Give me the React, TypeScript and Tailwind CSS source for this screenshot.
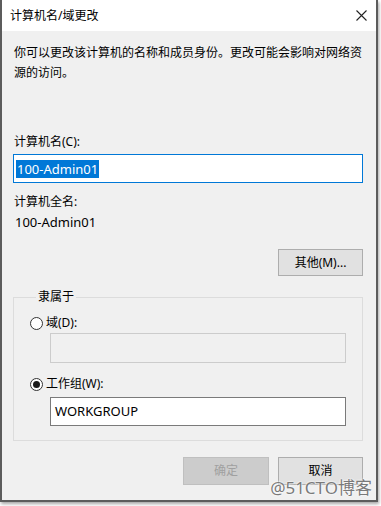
import React from "react";

const font = "font-['Noto_Sans','Noto_Sans_CJK_SC',sans-serif]";

const Radio = ({ checked }: { checked?: boolean }) => (
    <span className="w-[13px] h-[13px] rounded-full border border-[#333] bg-white flex items-center justify-center shrink-0">
        {checked && <span className="w-[7px] h-[7px] rounded-full bg-[#1a1a1a]" />}
    </span>
);

const App = () => {
    return (
        <div className={`relative w-[381px] h-[506px] bg-white text-[12px] text-black ${font}`}>
            <div className="w-[378px] h-[502px] flex flex-col border-x-2 border-b-2 border-[#5c5c5c] shadow-[1px_2px_3px_rgba(0,0,0,0.35)]">
                {/* title bar */}
                <div className="h-[31px] bg-white flex items-center justify-between pl-[8px] pr-[9px] shrink-0">
                    <span className="leading-[18px]">计算机名/域更改</span>
                    <svg width="11" height="11" viewBox="0 0 11 11" className="mr-[0px]">
                        <path d="M0.5 0.5 L10.5 10.5 M10.5 0.5 L0.5 10.5" stroke="#222" strokeWidth="1.1" />
                    </svg>
                </div>

                <div className="flex-1 bg-[#f0f0f0] pl-[11px] pr-[13px] pt-[12px]">
                    <p className="leading-[20px] pl-[1px]">
                        你可以更改该计算机的名称和成员身份。更改可能会影响对网络资源的访问。
                    </p>

                    <div className="mt-[50px] leading-[18px] pl-[1px]">计算机名(C):</div>
                    <div className="mt-[3px] h-[29px] bg-white border border-[#0078d7] flex items-center px-[2px]">
                        <span className="bg-[#0078d7] text-white text-[13px] leading-[18px] px-[1px]">100-Admin01</span>
                    </div>

                    <div className="mt-[10px] leading-[18px] pl-[1px]">计算机全名:</div>
                    <div className="mt-[2px] leading-[18px] pl-[2px] text-[13px]">100-Admin01</div>

                    <div className="mt-[18px] flex justify-end">
                        <button className="w-[85px] h-[27px] bg-[#e1e1e1] border border-[#adadad] leading-[18px]">
                            其他(M)...
                        </button>
                    </div>

                    <fieldset className="mt-[12px] border border-[#dcdcdc] pl-[16px] pr-[16px] pb-[14px]">
                        <legend className="ml-[6px] px-[2px] leading-[18px]">隶属于</legend>
                        <div className="mt-[8px] flex items-center gap-[3px] leading-[18px]">
                            <Radio />
                            <span>域(D):</span>
                        </div>
                        <div className="mt-[1px] ml-[20px] h-[30px] bg-[#f0f0f0] border border-[#cccccc]" />

                        <div className="mt-[12px] flex items-center gap-[3px] leading-[18px]">
                            <Radio checked />
                            <span>工作组(W):</span>
                        </div>
                        <div className="mt-[4px] ml-[20px] h-[29px] bg-white border border-[#7a7a7a] flex items-center px-[4px] text-[13px]">
                            WORKGROUP
                        </div>
                    </fieldset>

                    <div className="mt-[16px] flex justify-end gap-[9px]">
                        <button className="w-[86px] h-[28px] bg-[#cccccc] border border-[#bfbfbf] text-[#a0a0a0] leading-[18px]">
                            确定
                        </button>
                        <button className="w-[85px] h-[28px] bg-[#e1e1e1] border border-[#adadad] leading-[18px]">
                            取消
                        </button>
                    </div>
                </div>
            </div>

            {/* watermark */}
            <span className="absolute right-[9px] bottom-[8px] text-[17px] leading-[20px] text-[#7a7a7a] [text-shadow:0_0_2px_#fff,0_0_2px_#fff]">
                @51CTO博客
            </span>
        </div>
    );
};

export default App;
